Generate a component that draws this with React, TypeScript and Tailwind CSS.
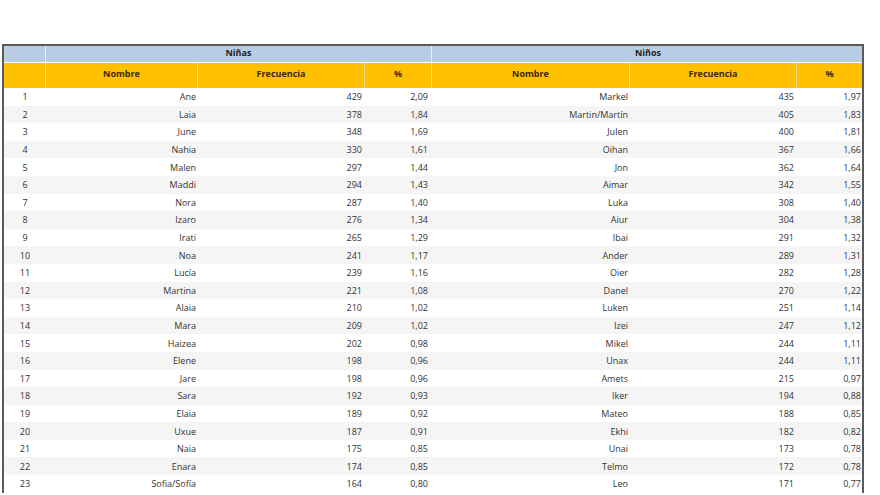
import React from "react";

const girls: [string, string, string][] = [
  ["Ane", "429", "2,09"],
  ["Laia", "378", "1,84"],
  ["June", "348", "1,69"],
  ["Nahia", "330", "1,61"],
  ["Malen", "297", "1,44"],
  ["Maddi", "294", "1,43"],
  ["Nora", "287", "1,40"],
  ["Izaro", "276", "1,34"],
  ["Irati", "265", "1,29"],
  ["Noa", "241", "1,17"],
  ["Lucía", "239", "1,16"],
  ["Martina", "221", "1,08"],
  ["Alaia", "210", "1,02"],
  ["Mara", "209", "1,02"],
  ["Haizea", "202", "0,98"],
  ["Elene", "198", "0,96"],
  ["Jare", "198", "0,96"],
  ["Sara", "192", "0,93"],
  ["Elaia", "189", "0,92"],
  ["Uxue", "187", "0,91"],
  ["Naia", "175", "0,85"],
  ["Enara", "174", "0,85"],
  ["Sofia/Sofía", "164", "0,80"],
];

const boys: [string, string, string][] = [
  ["Markel", "435", "1,97"],
  ["Martin/Martín", "405", "1,83"],
  ["Julen", "400", "1,81"],
  ["Oihan", "367", "1,66"],
  ["Jon", "362", "1,64"],
  ["Aimar", "342", "1,55"],
  ["Luka", "308", "1,40"],
  ["Aiur", "304", "1,38"],
  ["Ibai", "291", "1,32"],
  ["Ander", "289", "1,31"],
  ["Oier", "282", "1,28"],
  ["Danel", "270", "1,22"],
  ["Luken", "251", "1,14"],
  ["Izei", "247", "1,12"],
  ["Mikel", "244", "1,11"],
  ["Unax", "244", "1,11"],
  ["Amets", "215", "0,97"],
  ["Iker", "194", "0,88"],
  ["Mateo", "188", "0,85"],
  ["Ekhi", "182", "0,82"],
  ["Unai", "173", "0,78"],
  ["Telmo", "172", "0,78"],
  ["Leo", "171", "0,77"],
];

const cols = "grid grid-cols-[42px_152px_167px_67px_198px_167px_65px]";

export default function App() {
  return (
    <div
      className="w-[880px] h-[495px] bg-white overflow-hidden pt-[44px] pl-[2px]"
      style={{ fontFamily: '"Open Sans", "DejaVu Sans", sans-serif' }}
    >
      <div className="w-[862px] border-l-2 border-t-2 border-r-2 border-[#5a5a5a] text-[9px] leading-none">
        {/* Blue header */}
        <div className="grid grid-cols-[42px_386px_432px] h-[16px] bg-[#b8cce4] font-bold text-[#1e1e1e]">
          <div className="border-r border-white/70" />
          <div className="flex items-center justify-center pb-[3px] border-r border-white/70">Niñas</div>
          <div className="flex items-center justify-center pb-[3px]">Niños</div>
        </div>
        <div className="h-px bg-white" />
        {/* Orange header */}
        <div className={`${cols} h-[25px] bg-[#ffc000] font-bold text-[#3b2a00]`}>
          {["", "Nombre", "Frecuencia", "%", "Nombre", "Frecuencia", "%"].map((t, i) => (
            <div
              key={i}
              className={`flex items-center justify-center pb-[5px] ${i < 6 ? "border-r border-[#ffe08a]" : ""}`}
            >
              {t}
            </div>
          ))}
        </div>
        {/* Data rows */}
        {girls.map((g, i) => {
          const b = boys[i];
          return (
            <div
              key={i}
              className={`${cols} h-[17.6px] text-[#333333] ${i % 2 === 1 ? "bg-[#f5f5f5]" : "bg-white"}`}
            >
              <div className="flex items-center justify-center">{i + 1}</div>
              <div className="flex items-center justify-end pr-[2px]">{g[0]}</div>
              <div className="flex items-center justify-end pr-[3px]">{g[1]}</div>
              <div className="flex items-center justify-end pr-[4px]">{g[2]}</div>
              <div className="flex items-center justify-end pr-[2px]">{b[0]}</div>
              <div className="flex items-center justify-end pr-[3px]">{b[1]}</div>
              <div className="flex items-center justify-end pr-[1px]">{b[2]}</div>
            </div>
          );
        })}
      </div>
    </div>
  );
}
